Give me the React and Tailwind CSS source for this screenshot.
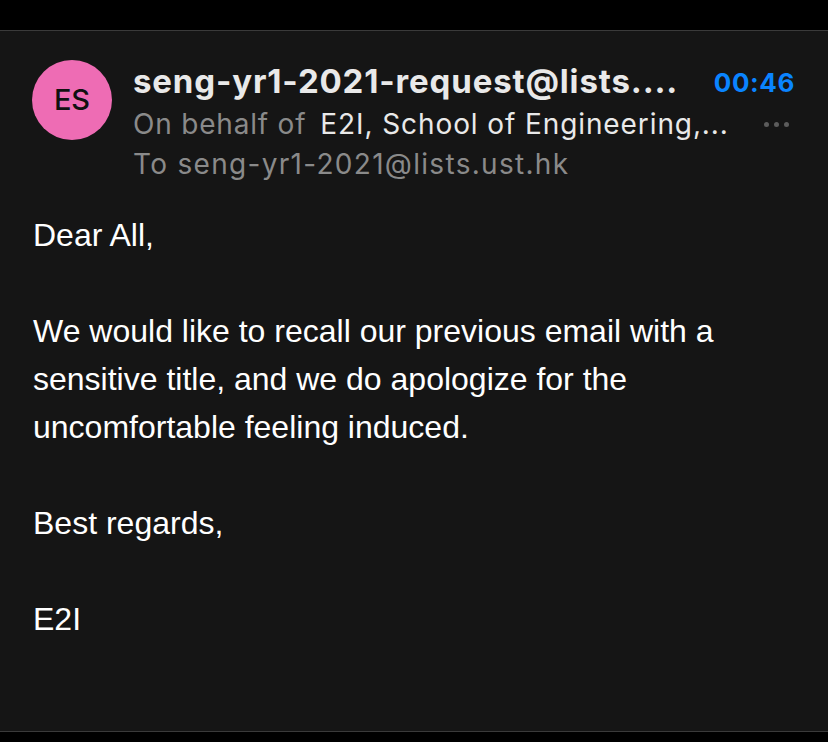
export default function App() {
  return (
    <div className="w-[828px] h-[742px] bg-black flex flex-col overflow-hidden">
      <div className="h-[30px] shrink-0 bg-black" />
      <div className="h-[702px] shrink-0 bg-[#151515] border-y border-[#3a3a3a] flex flex-col">
        {/* Header */}
        <div className="flex items-start pl-8 pr-[33px] pt-[29px]">
          <div className="w-20 h-20 shrink-0 rounded-full bg-[#ee6cb4] flex items-center justify-center text-[#111] text-[29px] font-medium font-['Inter',sans-serif]">
            ES
          </div>
          <div className="ml-[21px] flex-1 min-w-0 font-['Inter',sans-serif]">
            <div className="flex items-center h-[42px] mt-[1px]">
              <span className="flex-1 text-[33px] font-bold text-[#e9e9e9] tracking-[0.85px] whitespace-nowrap">
                seng-yr1-2021-request@lists....
              </span>
              <span className="text-[26px] font-bold text-[#0a84ff] tracking-[0.6px]">00:46</span>
            </div>
            <div className="flex items-center h-[40px] mt-[1px]">
              <span className="text-[28px] text-[#8a8a8a] tracking-[0.8px] whitespace-nowrap">On behalf of</span>
              <span className="ml-[14px] flex-1 text-[28px] text-[#e9e9e9] tracking-[0.9px] whitespace-nowrap">
                E2I, School of Engineering,...
              </span>
              <span className="flex gap-[5px] mr-[6px]">
                <span className="w-[5px] h-[5px] rounded-full bg-[#5c5c5c]" />
                <span className="w-[5px] h-[5px] rounded-full bg-[#5c5c5c]" />
                <span className="w-[5px] h-[5px] rounded-full bg-[#5c5c5c]" />
              </span>
            </div>
            <div className="flex items-center h-[40px] text-[28px] text-[#8a8a8a] tracking-[1.3px] whitespace-nowrap">
              To seng-yr1-2021@lists.ust.hk
            </div>
          </div>
        </div>

        {/* Body */}
        <div className="px-[33px] pt-[27px] text-[32px] leading-[48px] text-white font-['Liberation_Sans',Arial,sans-serif]">
          <p>Dear All,</p>
          <p className="h-[48px]" />
          <p>
            We would like to recall our previous email with a
            <br />
            sensitive title, and we do apologize for the
            <br />
            uncomfortable feeling induced.
          </p>
          <p className="h-[48px]" />
          <p>Best regards,</p>
          <p className="h-[48px]" />
          <p>E2I</p>
        </div>
      </div>
    </div>
  )
}
